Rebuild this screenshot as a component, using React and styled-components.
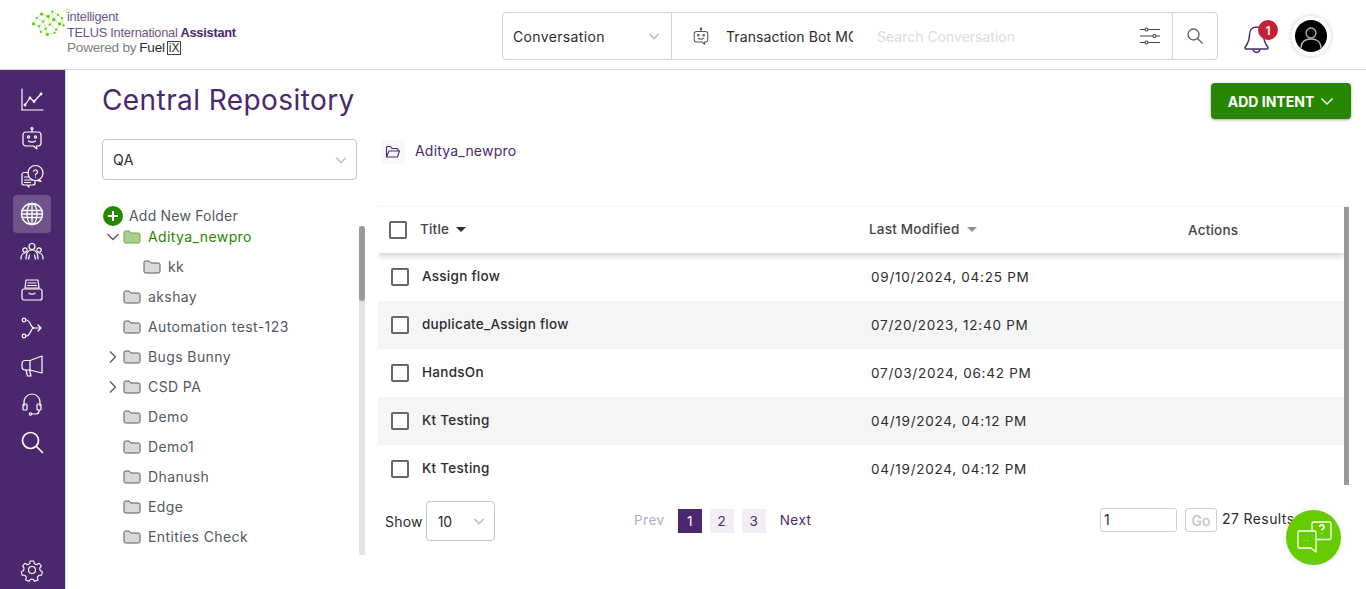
import React from "react";
import styled, { createGlobalStyle } from "styled-components";

const Global = createGlobalStyle`
  html, body { margin: 0; padding: 0; height: 100%; overflow: hidden; background: #fff; }
  * { box-sizing: border-box; }
  body { font-family: Inter, "Liberation Sans", sans-serif; color: #2a2c2e; }
`;

const Page = styled.div`
  width: 1366px; height: 589px; display: flex; flex-direction: column; overflow: hidden; position: relative;
`;
const Header = styled.header`
  height: 70px; flex: none; display: flex; align-items: flex-start; border-bottom: 1px solid #d4d4d4; background: #fff;
`;
const Logo = styled.div`
  width: 502px; flex: none; display: flex; padding: 8px 0 0 31px;
`;
const LogoText = styled.div`
  display: flex; flex-direction: column; margin-left: -4px; padding-top: 1px; font-family: "Liberation Sans", sans-serif; letter-spacing: -0.25px;
`;
const LogoLine = styled.div`
  font-size: ${p => p.$size || 12.8}px; line-height: 15.5px; color: ${p => p.$color || "#6d5587"}; white-space: nowrap; display: flex; align-items: center;
`;
const Strong = styled.b`
  color: #4b286d; margin-left: 3px;
`;
const FuelWord = styled.span`
  color: #2a2c2e; margin-left: 3px;
`;
const IxBox = styled.span`
  border: 1px solid #444; color: #2a2c2e; font-size: 12px; line-height: 12px; padding: 0 1px; margin-left: 2px; letter-spacing: 0;
`;
const SearchBar = styled.div`
  margin-top: 12px; width: 716px; height: 48px; display: flex; align-items: center; border: 1px solid #d4d4d4; border-radius: 4px;
`;
const ScopeSelect = styled.div`
  width: 169px; height: 100%; flex: none; display: flex; align-items: center; justify-content: space-between; padding: 0 11px 0 10px; border-right: 1px solid #d4d4d4; font-size: 14px; letter-spacing: 0.35px; color: #2a2c2e;
`;
const BotChip = styled.div`
  width: 205px; flex: none; display: flex; align-items: center; padding-left: 20px; gap: 16px; font-size: 14px; color: #2a2c2e; overflow: hidden;
`;
const BotName = styled.span`
  width: 127px; overflow: hidden; white-space: nowrap; letter-spacing: 0.1px;
`;
const SearchHint = styled.div`
  flex: 1; font-size: 14px; letter-spacing: 0; color: #dcdcdc;
`;
const FilterCell = styled.div`
  width: 44px; display: flex; justify-content: center;
`;
const SearchBtn = styled.div`
  width: 45px; height: 100%; flex: none; display: flex; align-items: center; justify-content: center; border-left: 1px solid #d4d4d4;
`;
const BellWrap = styled.div`
  position: relative; width: 28px; height: 34px; margin: 21px 0 0 25px;
`;
const BellBadge = styled.span`
  position: absolute; left: 15px; top: -1px; width: 20px; height: 20px; border-radius: 50%; background: #c12335; color: #fff; font-size: 12px; font-weight: 600; display: flex; align-items: center; justify-content: center;
`;
const Avatar = styled.div`
  margin: 16px 0 0 20px; width: 40px; height: 40px; border-radius: 50%; background: #fff; box-shadow: 0 0 4px rgba(0,0,0,.22); display: flex; align-items: center; justify-content: center;
`;
const AvatarInner = styled.div`
  width: 32px; height: 32px; border-radius: 50%; background: #000; overflow: hidden; display: flex; align-items: center; justify-content: center;
`;
const Body = styled.div`
  flex: 1; display: flex; min-height: 0;
`;
const Sidebar = styled.nav`
  width: 66px; flex: none; background: #4b286d; border-right: 1px solid #d9d4e2; display: flex; flex-direction: column; align-items: center; padding: 11px 2px 0 0;
`;
const NavItem = styled.div`
  width: 38px; height: 38px; flex: none; border-radius: 4px; display: flex; align-items: center; justify-content: center; background: ${p => p.$active ? "rgba(255,255,255,.2)" : "transparent"};
`;
const Spacer = styled.div`
  flex: 1;
`;
const Main = styled.main`
  flex: 1; min-width: 0; padding: 0 15px 0 36px; display: flex; flex-direction: column;
`;
const TitleRow = styled.div`
  height: 69px; flex: none; display: flex; justify-content: space-between; align-items: flex-start;
`;
const Title = styled.h1`
  margin: 12px 0 0; font-size: 28px; line-height: 36px; font-weight: 400; letter-spacing: 0.42px; color: #4b286d;
`;
const AddButton = styled.button`
  margin-top: 13px; width: 140px; height: 36px; border: 0; border-radius: 4px; background: #288700; color: #fff; font-family: inherit; font-size: 14px; font-weight: 700; letter-spacing: 0; display: flex; align-items: center; justify-content: center; gap: 6px; box-shadow: 0 1px 3px rgba(0,0,0,.35);
`;
const Columns = styled.div`
  flex: 1; display: flex; min-height: 0;
`;
const LeftCol = styled.div`
  width: 276px; flex: none; display: flex; flex-direction: column;
`;
const FolderSelect = styled.div`
  width: 255px; height: 41px; flex: none; border: 1px solid #c4c4c4; border-radius: 4px; display: flex; align-items: center; justify-content: space-between; padding: 0 9px 0 10px; font-size: 14px; letter-spacing: 0.4px; color: #2a2c2e;
`;
const AddFolder = styled.div`
  margin-top: 25px; height: 21px; flex: none; display: flex; align-items: center; gap: 6px; font-size: 14px; letter-spacing: 0.2px; color: #54595f; padding-left: 1px;
`;
const PlusDot = styled.span`
  width: 20px; height: 20px; border-radius: 50%; background: #288700; display: flex; align-items: center; justify-content: center;
`;
const TreeWrap = styled.div`
  position: relative; flex: 1; min-height: 0; display: flex; margin-bottom: 34px; overflow: hidden;
`;
const TreeList = styled.ul`
  list-style: none; margin: -5px 0 0; padding: 0; width: 257px; overflow: hidden;
`;
const TreeRow = styled.li`
  height: 30px; display: flex; align-items: center; padding-left: ${p => (p.$level || 0) * 20 + 4}px; font-size: 14px; letter-spacing: 0.4px; color: ${p => p.$active ? "#288700" : "#54595f"};
`;
const Caret = styled.span`
  width: 14px; height: 14px; flex: none; margin: 2px 3px 0 0; display: flex; align-items: center; justify-content: center;
`;
const FolderGlyph = styled.span`
  width: 18px; height: 16px; flex: none; margin: 2px 7px 0 0; display: flex;
`;
const ScrollTrack = styled.div`
  width: 6px; height: 100%; background: #e3e3e3; flex: none;
`;
const ScrollThumb = styled.div`
  width: 100%; height: 75px; border-radius: 3px; background: #9a9a9a;
`;
const RightCol = styled.div`
  flex: 1; min-width: 0; display: flex; flex-direction: column; position: relative;
`;
const Crumb = styled.div`
  height: 67px; flex: none; display: flex; align-items: flex-start; gap: 10px; padding: 1px 0 0 3px; font-size: 14px; letter-spacing: 0.2px; color: #4b286d;
`;
const CrumbIcon = styled.span`
  width: 24px; height: 24px; border-radius: 4px; background: #f7f7f8; display: flex; align-items: center; justify-content: center;
`;
const CrumbText = styled.span`
  line-height: 22px;
`;
const TableShell = styled.div`
  height: 279px; flex: none; position: relative; overflow: hidden; border-top: 1px solid #f0f0f0; width: 971px;
`;
const HeaderRow = styled.div`
  height: 46px; display: flex; align-items: center; background: #fff; box-shadow: 0 3px 6px rgba(0,0,0,.18); position: relative; width: 966px;
`;
const RowsWrap = styled.div`
  width: 966px;
`;
const Row = styled.div`
  height: 48px; display: flex; align-items: center; background: ${p => p.$alt ? "#f5f5f5" : "#fff"};
`;
const TitleHead = styled.div`
  width: 491px; flex: none; display: flex; align-items: center; padding-left: 11px; gap: 13px; font-size: 13.5px; font-weight: 500; letter-spacing: 0.2px; color: #414547;
`;
const HeadLabel = styled.span`
  padding-bottom: 2px;
`;
const SortGlyph = styled.span`
  display: flex; margin-left: ${p => p.$ml}px;
`;
const ModHead = styled.div`
  width: 319px; flex: none; display: flex; align-items: center; gap: 8px; font-size: 13.5px; font-weight: 500; letter-spacing: 0.2px; color: #414547;
`;
const ActionsHead = styled.div`
  font-size: 13.5px; font-weight: 500; letter-spacing: 0.2px; color: #414547;
`;
const Check = styled.span`
  width: 18px; height: 18px; flex: none; border: 2px solid #676767; border-radius: 2px; background: #fff;
`;
const NameCell = styled.div`
  width: 493px; flex: none; display: flex; align-items: center; padding-left: 13px; gap: 13px; font-size: 13.5px; font-weight: 500; letter-spacing: 0.27px; color: #2a2c2e;
`;
const NameText = styled.span`
  padding-bottom: 2px;
`;
const DateCell = styled.div`
  font-size: 13.5px; letter-spacing: 0.75px; color: #2a2c2e;
`;
const TableScroll = styled.div`
  position: absolute; left: 966px; top: 0; bottom: 0; width: 5px; background: #9a9a9a;
`;
const Pager = styled.div`
  display: flex; align-items: flex-start; height: 56px; padding-top: 16px; position: relative;
`;
const ShowBox = styled.div`
  display: flex; align-items: center; gap: 3px; width: 251px; padding-left: 7px; font-size: 14px; letter-spacing: 0.2px; color: #2a2c2e;
`;
const ShowSelect = styled.div`
  width: 69px; height: 40px; border: 1px solid #c4c4c4; border-radius: 4px; display: flex; align-items: center; justify-content: space-between; padding: 0 9px 0 11px; letter-spacing: 0;
`;
const PageLinks = styled.div`
  width: 471px; flex: none; display: flex; align-items: center; gap: 8px; margin-top: 8px; font-size: 13.5px; letter-spacing: 0.5px;
`;
const PageText = styled.span`
  color: ${p => p.$off ? "#b7a9c5" : "#4b286d"}; margin: 0 ${p => p.$m || 0}px; padding-bottom: 2px;
`;
const PageNum = styled.span`
  width: 24px; height: 24px; display: flex; align-items: center; justify-content: center; padding-bottom: 1px; letter-spacing: 0; background: ${p => p.$on ? "#4b286d" : "#f1eff4"}; color: ${p => p.$on ? "#fff" : "#4b286d"};
`;
const GoRow = styled.div`
  display: flex; align-items: center; margin-top: 7px;
`;
const GoInput = styled.div`
  width: 77px; height: 24px; border: 1px solid #cdd2d6; border-radius: 3px; font-size: 14px; line-height: 22px; padding-left: 3px; color: #2a2c2e;
`;
const GoBtn = styled.div`
  margin-left: 8px; width: 32px; height: 24px; border: 1px solid #cfcfcf; border-radius: 3px; font-size: 14px; font-weight: 500; color: #c4c4c4; display: flex; align-items: center; justify-content: center;
`;
const Results = styled.div`
  margin-left: 5px; font-size: 14px; letter-spacing: 0.4px; white-space: nowrap; color: #2a2c2e; margin-top: -3px;
`;
const Fab = styled.div`
  position: absolute; left: 1286px; top: 510px; width: 55px; height: 55px; border-radius: 50%; background: #66cc00; box-shadow: 0 1px 6px rgba(0,0,0,.08); display: flex; align-items: center; justify-content: center;
`;

const Chevron = ({ color = "#c4c4c4", size = 12, w = 2 }) => (
  <svg width={size} height={size} viewBox="0 0 14 14" fill="none"><path d="M1.5 4.5 7 10l5.5-5.5" stroke={color} strokeWidth={w} /></svg>
);

const brainNodes = [[3,19],[7,12],[10,22],[13,7],[15,16],[18,25],[21,10],[23,20],[26,4],[28,14],[31,26],[33,8],[35,19],[38,12],[29,30],[20,32],[40,21],[12,29]];
const brainLinks = [[0,1],[0,2],[1,3],[1,4],[2,4],[2,17],[3,6],[4,6],[4,5],[5,7],[6,7],[6,8],[7,9],[8,9],[8,11],[9,11],[9,12],[10,12],[10,14],[11,13],[12,13],[12,16],[14,15],[5,15],[5,17],[7,10],[13,16]];
const BrainLogo = () => (
  <svg width="40" height="30" viewBox="0 0 49 36">
    {brainLinks.map(([a,b],i) => <line key={i} x1={brainNodes[a][0]} y1={brainNodes[a][1]} x2={brainNodes[b][0]} y2={brainNodes[b][1]} stroke="#a6dc6e" strokeWidth=".8" />)}
    {brainNodes.map(([x,y],i) => <circle key={i} cx={x} cy={y} r={i%3?1.4:2} fill="#66cc00" />)}
    <circle cx="45" cy="3" r="2" fill="none" stroke="#a6dc6e" strokeWidth=".8" />
  </svg>
);

const I = { width: 24, height: 24, viewBox: "0 0 24 24", fill: "none", stroke: "#fff", strokeWidth: 1.2, strokeLinecap: "round", strokeLinejoin: "round" };
const BotPaths = () => (<>
  <circle cx="12" cy="2.5" r="1" /><path d="M12 3.5V6" />
  <path d="M6 6h12a3 3 0 0 1 3 3v8a3 3 0 0 1-3 3h-1.500l.5 3-3.500-3H6a3 3 0 0 1-3-3V9a3 3 0 0 1 3-3Z" />
  <circle cx="8.500" cy="11" r="1.100" /><circle cx="15.500" cy="11" r="1.100" /><path d="M8.500 15c2 1.400 5 1.400 7 0" />
</>);
const icons = [
  <svg {...I}><path d="M2 1v21h21" /><path d="M5 17l5-7 4 3.500L21 6" /><circle cx="5" cy="17" r=".8" /><circle cx="10" cy="10" r=".8" /><circle cx="14" cy="13.500" r=".8" /><circle cx="21" cy="6" r=".8" /></svg>,
  <svg {...I}><BotPaths /></svg>,
  <svg {...I}><circle cx="15.500" cy="9" r="7.500" /><path d="M19 15.500l2 2-3.500-.8" /><path d="M13.600 7.200a2 2 0 1 1 2.600 2.600c-.6.300-.7.700-.7 1.300M15.500 13v.2" /><path d="M8 8.500H4a2 2 0 0 0-2 2V19a2 2 0 0 0 2 2h3l2 2v-2h4a2 2 0 0 0 2-2v-2.500" /><path d="M4.500 13H9M4.500 16h8M4.500 18.500h6" /></svg>,
  <svg {...I} strokeWidth="1.300"><circle cx="12" cy="12" r="10.500" /><ellipse cx="12" cy="12" rx="5" ry="10.500" /><path d="M12 1.500v21M2 8.500h20M2 15.500h20M1.500 12h21" /></svg>,
  <svg {...I}><circle cx="12" cy="6.500" r="3" /><circle cx="5" cy="10" r="2.200" /><circle cx="19" cy="10" r="2.200" /><path d="M6 19c0-5 2-9 6-9s6 4 6 9" /><path d="M1 19c0-3 1.500-6 4-6M23 19c0-3-1.500-6-4-6" /><path d="M9.500 15l-1 4M14.500 15l1 4" /></svg>,
  <svg {...I}><path d="M6 2h12l1 8H5Z" /><path d="M8 5h8M7.500 7.500h9" /><rect x="2" y="11" width="20" height="11" rx="2" /><path d="M9 15c0 1.500 6 1.500 6 0" /></svg>,
  <svg {...I}><circle cx="4" cy="4" r="1.800" /><circle cx="4" cy="20" r="1.800" /><path d="M6 4c5 0 4 8 8 8h7M18 9l3 3-3 3" /><path d="M6 20c5 0 4-8 8-8" /></svg>,
  <svg {...I}><path d="M22 2v17L10 16H5a3 3 0 0 1-3-3V9.500A3 3 0 0 1 5 6.500h5Z" /><path d="M10 6.500V16" /><path d="M6 16l1.500 6H11l-1.500-6" /></svg>,
  <svg {...I}><path d="M4 14v-4a8 8 0 0 1 16 0v4" /><rect x="3" y="12" width="4" height="6" rx="1" /><rect x="17" y="12" width="4" height="6" rx="1" /><path d="M19 18v1a3 3 0 0 1-3 3h-4" /><circle cx="10.500" cy="22" r="1.200" /></svg>,
  <svg {...I} strokeWidth="1.700"><circle cx="10.500" cy="10.500" r="8" /><path d="M16.500 16.500l6 6" /></svg>,
];
const Gear = () => (
  <svg {...I}><circle cx="12" cy="12" r="3.500" /><path d="M10 2h4l.6 3 2.500 1.100 2.600-1.600 2.700 3-1.800 2.400.4 2.600 2.500 1.300-.8 3.900-3 .2-1.700 2.100.7 3-3.600 1.600-1.900-2.400h-2.700l-1.900 2.400-3.600-1.600.7-3-1.700-2.100-3-.2-.8-3.900 2.500-1.300.4-2.600L1.600 7.500l2.700-3 2.600 1.600L9.400 5Z" transform="translate(1.200 1.200) scale(.9)" /></svg>
);

const Folder = ({ active }) => (
  <FolderGlyph>
    <svg width="18" height="16" viewBox="0 0 18 16">
      <path d="M1 3.500A1.500 1.500 0 0 1 2.500 2h3.700l1.600 2H15.500A1.500 1.500 0 0 1 17 5.500v7a1.500 1.500 0 0 1-1.500 1.500h-13A1.500 1.500 0 0 1 1 12.500Z" fill={active ? "#a8d08d" : "#d9d9d9"} stroke={active ? "#6ea44d" : "#54595f"} strokeWidth="1" />
    </svg>
  </FolderGlyph>
);

const tree = [
  { n: "Aditya_newpro", open: true, active: true },
  { n: "kk", level: 1 },
  { n: "akshay" },
  { n: "Automation test-123" },
  { n: "Bugs Bunny", closed: true },
  { n: "CSD PA", closed: true },
  { n: "Demo" }, { n: "Demo1" }, { n: "Dhanush" }, { n: "Edge" }, { n: "Entities Check" },
];
const rows = [
  ["Assign flow", "09/10/2024, 04:25 PM"],
  ["duplicate_Assign flow", "07/20/2023, 12:40 PM"],
  ["HandsOn", "07/03/2024, 06:42 PM"],
  ["Kt Testing", "04/19/2024, 04:12 PM"],
  ["Kt Testing", "04/19/2024, 04:12 PM"],
];
const Down = ({ color }) => <svg width="10" height="6" viewBox="0 0 10 6"><path d="M0 0h10L5 5Z" fill={color} /></svg>;

export default function App() {
  return (
    <Page>
      <Global />
      <Header>
        <Logo>
          <BrainLogo />
          <LogoText>
            <LogoLine>intelligent</LogoLine>
            <LogoLine>TELUS International<Strong>Assistant</Strong></LogoLine>
            <LogoLine $size={13.6} $color="#808080">Powered by<FuelWord>Fuel</FuelWord><IxBox>iX</IxBox></LogoLine>
          </LogoText>
        </Logo>
        <SearchBar>
          <ScopeSelect>Conversation<Chevron /></ScopeSelect>
          <BotChip>
            <svg {...I} width="18" height="20" stroke="#54595f" strokeWidth="1.400"><BotPaths /></svg>
            <BotName>Transaction Bot MC</BotName>
          </BotChip>
          <SearchHint>Search Conversation</SearchHint>
          <FilterCell>
            <svg width="22" height="20" viewBox="0 0 22 20" fill="none" stroke="#3f4448" strokeWidth="1.100"><path d="M1 3.500h5M9 3.500h12M1 10h13M17 10h4M1 16.500h5M9 16.500h12" /><circle cx="7.500" cy="3.500" r="1.500" /><circle cx="15.500" cy="10" r="1.500" /><circle cx="7.500" cy="16.500" r="1.500" /></svg>
          </FilterCell>
          <SearchBtn>
            <svg width="18" height="18" viewBox="0 0 18 18" fill="none" stroke="#54595f" strokeWidth="1.300"><circle cx="7.500" cy="7.500" r="5.500" /><path d="M11.500 11.500l5 5" /></svg>
          </SearchBtn>
        </SearchBar>
        <BellWrap>
          <svg width="28" height="34" viewBox="0 0 28 34" fill="none" stroke="#4b286d" strokeWidth="1.500"><path d="M13.500 6c-4.500 0-7 3.500-7 8 0 6-2 9-4.500 12.500 0 .8.500 1.500 1 1.500h21c.5 0 1-.7 1-1.500C22.500 23 20.500 20 20.500 14c0-4.500-2.500-8-7-8Z" /><path d="M10 28c.5 4.500 6.500 4.500 7 0" /></svg>
          <BellBadge>1</BellBadge>
        </BellWrap>
        <Avatar>
          <AvatarInner>
            <svg width="24" height="24" viewBox="0 0 24 24" fill="none" stroke="#b5b5b5" strokeWidth="1.300"><circle cx="12" cy="9" r="5" /><path d="M2 24c0-6 4-9 10-9s10 3 10 9" /></svg>
          </AvatarInner>
        </Avatar>
      </Header>
      <Body>
        <Sidebar>
          {icons.map((ic, i) => <NavItem key={i} $active={i === 3}>{ic}</NavItem>)}
          <Spacer />
          <NavItem><Gear /></NavItem>
        </Sidebar>
        <Main>
          <TitleRow>
            <Title>Central Repository</Title>
            <AddButton>ADD INTENT <Chevron color="#fff" size={14} w={1.400} /></AddButton>
          </TitleRow>
          <Columns>
            <LeftCol>
              <FolderSelect>QA<Chevron /></FolderSelect>
              <AddFolder>
                <PlusDot><svg width="12" height="12" viewBox="0 0 12 12"><path d="M6 1v10M1 6h10" stroke="#fff" strokeWidth="2" /></svg></PlusDot>
                Add New Folder
              </AddFolder>
              <TreeWrap>
                <TreeList>
                  {tree.map(t => (
                    <TreeRow key={t.n} $level={t.level} $active={t.active}>
                      <Caret>
                        {t.open && <svg width="14" height="14" viewBox="0 0 14 14" fill="none"><path d="M1.500 4 7 9.500 12.500 4" stroke="#54595f" strokeWidth="1.300" /></svg>}
                        {t.closed && <svg width="14" height="14" viewBox="0 0 14 14" fill="none"><path d="M4 1.500 9.500 7 4 12.500" stroke="#54595f" strokeWidth="1.300" /></svg>}
                      </Caret>
                      <Folder active={t.active} />
                      {t.n}
                    </TreeRow>
                  ))}
                </TreeList>
                <ScrollTrack><ScrollThumb /></ScrollTrack>
              </TreeWrap>
            </LeftCol>
            <RightCol>
              <Crumb>
                <CrumbIcon>
                  <svg width="16" height="14" viewBox="0 0 16 14" fill="none" stroke="#4b286d" strokeWidth="1.100"><path d="M1.500 12V2.500A1 1 0 0 1 2.500 1.500h3l1.500 2h5a1 1 0 0 1 1 1v1.500" /><path d="M1.500 12 4 6h10.500L12.500 12Z" /></svg>
                </CrumbIcon>
                <CrumbText>Aditya_newpro</CrumbText>
              </Crumb>
              <TableShell>
                <HeaderRow>
                  <TitleHead><Check /><HeadLabel>Title</HeadLabel><SortGlyph $ml={-6}><Down color="#2a2c2e" /></SortGlyph></TitleHead>
                  <ModHead><HeadLabel>Last Modified</HeadLabel><SortGlyph $ml={0}><Down color="#8f8f8f" /></SortGlyph></ModHead>
                  <ActionsHead>Actions</ActionsHead>
                </HeaderRow>
                <RowsWrap>
                  {rows.map((r, i) => (
                    <Row key={i} $alt={i % 2 === 1}>
                      <NameCell><Check /><NameText>{r[0]}</NameText></NameCell>
                      <DateCell>{r[1]}</DateCell>
                    </Row>
                  ))}
                </RowsWrap>
                <TableScroll />
              </TableShell>
              <Pager>
                <ShowBox>Show<ShowSelect>10<Chevron /></ShowSelect></ShowBox>
                <PageLinks>
                  <PageText $off $m={5}>Prev</PageText>
                  <PageNum $on>1</PageNum>
                  <PageNum>2</PageNum>
                  <PageNum>3</PageNum>
                  <PageText $m={6}>Next</PageText>
                </PageLinks>
                <GoRow>
                  <GoInput>1</GoInput>
                  <GoBtn>Go</GoBtn>
                  <Results>27 Results</Results>
                </GoRow>
              </Pager>
            </RightCol>
          </Columns>
        </Main>
      </Body>
      <Fab>
        <svg width="36" height="34" viewBox="0 0 36 34" fill="none" stroke="#fff" strokeWidth="1.300" strokeLinejoin="round">
          <path d="M16 9V2.500A1.500 1.500 0 0 1 17.500 1h16A1.500 1.500 0 0 1 35 2.500V17a1.500 1.500 0 0 1-1.500 1.500H21" />
          <path d="M3.500 10h15A1.500 1.500 0 0 1 20 11.500V31l-5-4H3.500A1.500 1.500 0 0 1 2 25.500v-14A1.500 1.500 0 0 1 3.500 10Z" />
          <path d="M23.500 6a2.200 2.200 0 1 1 3.200 2c-.6.300-.9.700-.9 1.500M25.800 12v.5" strokeWidth="1.800" />
          <path d="M8 19.500v.5M12 19.500v.5" />
        </svg>
      </Fab>
    </Page>
  );
}
